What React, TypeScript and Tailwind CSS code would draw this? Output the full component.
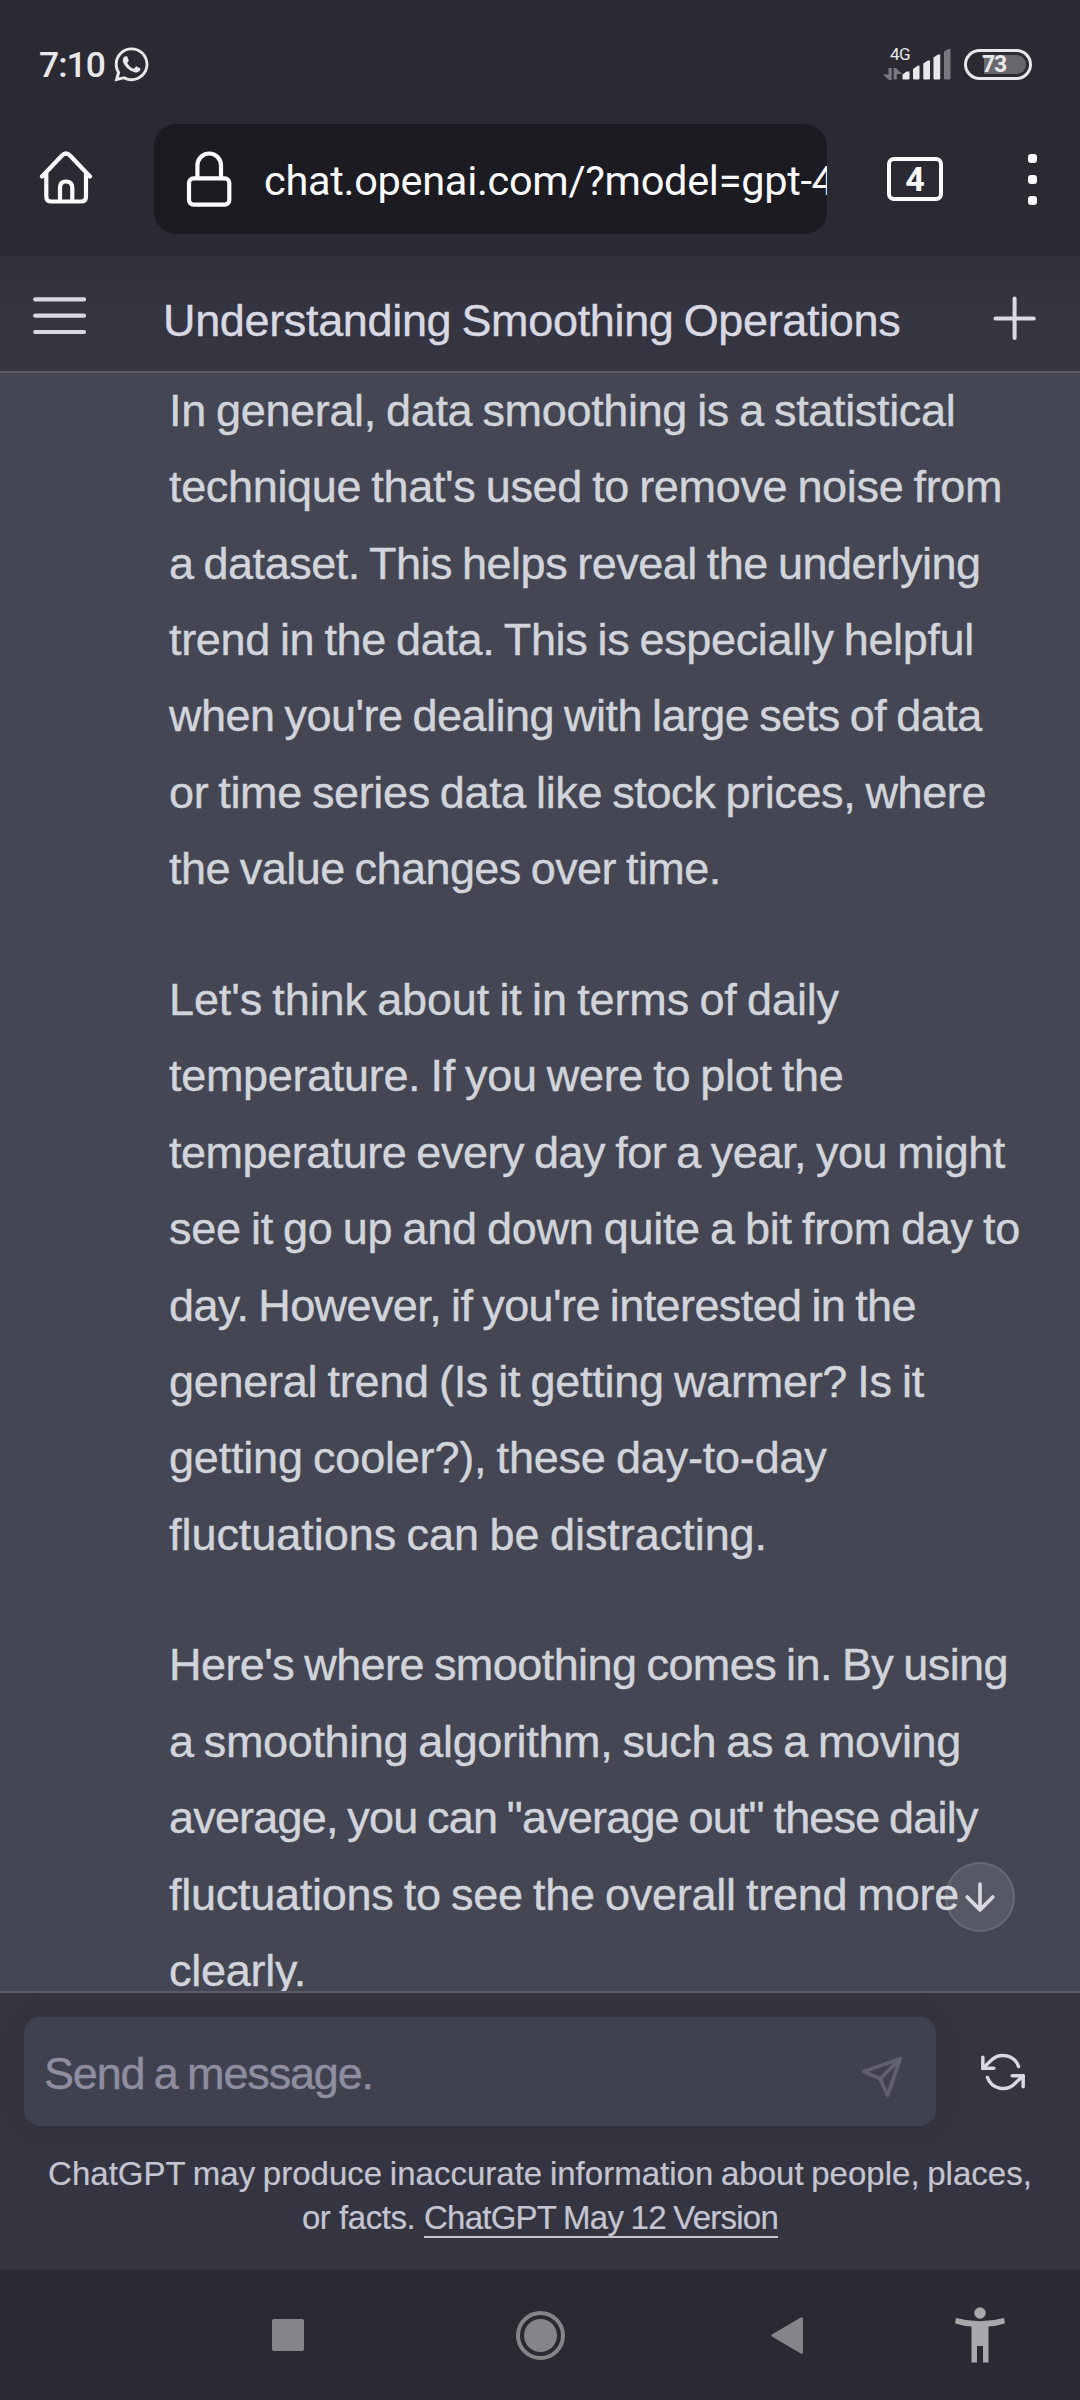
const paragraphs: { text: string; tracking: string }[][] = [
  [
    { text: 'In general, data smoothing is a statistical', tracking: 'tracking-[-0.34px]' },
    { text: "technique that's used to remove noise from", tracking: 'tracking-[-0.33px]' },
    { text: 'a dataset. This helps reveal the underlying', tracking: 'tracking-[-0.49px]' },
    { text: 'trend in the data. This is especially helpful', tracking: 'tracking-[-0.35px]' },
    { text: "when you're dealing with large sets of data", tracking: 'tracking-[-0.52px]' },
    { text: 'or time series data like stock prices, where', tracking: 'tracking-[-0.38px]' },
    { text: 'the value changes over time.', tracking: 'tracking-[-0.56px]' },
  ],
  [
    { text: "Let's think about it in terms of daily", tracking: 'tracking-[-0.13px]' },
    { text: 'temperature. If you were to plot the', tracking: 'tracking-[-0.32px]' },
    { text: 'temperature every day for a year, you might', tracking: 'tracking-[-0.48px]' },
    { text: 'see it go up and down quite a bit from day to', tracking: 'tracking-[-0.28px]' },
    { text: "day. However, if you're interested in the", tracking: 'tracking-[-0.59px]' },
    { text: 'general trend (Is it getting warmer? Is it', tracking: 'tracking-[-0.27px]' },
    { text: 'getting cooler?), these day-to-day', tracking: 'tracking-[-0.2px]' },
    { text: 'fluctuations can be distracting.', tracking: 'tracking-[-0.04px]' },
  ],
  [
    { text: "Here's where smoothing comes in. By using", tracking: 'tracking-[-0.56px]' },
    { text: 'a smoothing algorithm, such as a moving', tracking: 'tracking-[-0.36px]' },
    { text: 'average, you can "average out" these daily', tracking: 'tracking-[-0.82px]' },
    { text: 'fluctuations to see the overall trend more', tracking: 'tracking-[-0.26px]' },
    { text: 'clearly.', tracking: 'tracking-[-0.27px]' },
  ],
];

function StatusBar() {
  return (
    <div className="flex h-[124px] items-start pt-[45px] text-[#e8e8ea]">
      <span className="mt-px ml-[39px] w-[75px] text-[35.5px] leading-[38px] font-medium tracking-[-1px]">7:10</span>
      <svg className="mt-[2px] size-[35px]" viewBox="0 0 24 24" fill="currentColor">
        <path d="M12.04 0.3C5.6 0.3 0.5 5.4 0.5 11.8c0 2 0.5 4 1.5 5.6L0.4 23.6l6.2-1.5c1.7 0.9 3.5 1.3 5.4 1.3 6.4 0 11.6-5.1 11.6-11.6S18.4 0.3 12.04 0.3zm0 21.1c-1.8 0-3.5-.5-5-1.4l-3.7.9.9-3.6c-1-1.6-1.7-3.4-1.7-5.5 0-5.2 4.2-9.5 9.5-9.5s9.6 4.3 9.6 9.5-4.3 9.6-9.6 9.6z" />
        <path d="M17.5 14.4c-.3-.2-1.8-.9-2-1s-.5-.1-.7.2-.8 1-.9 1.1-.3.2-.6.1-1.300-.5-2.400-1.500c-.9-.8-1.500-1.800-1.700-2.100s0-.5.100-.6c.2-.2.3-.4.5-.6.1-.2.2-.3.300-.5s0-.4 0-.5-.7-1.600-.9-2.200c-.2-.6-.5-.5-.7-.5h-.6c-.2 0-.5.1-.8.4S6 7.700 6 9.100s1.100 2.900 1.200 3.100 2.100 3.200 5.100 4.500c.7.3 1.300.5 1.700.6.700.2 1.400.2 1.900.1.600-.1 1.800-.7 2-1.400s.2-1.300.2-1.400-.3-.1-.6-.2z" />
      </svg>
      <div className="relative ml-[734px] h-[36px] w-[69px]">
        <span className="absolute top-0 left-[7px] text-[17px] leading-[18px] tracking-[-0.5px]">4G</span>
        <svg className="size-full" viewBox="883 45 69 36" fill="currentColor">
          <g fill="#7a7980">
            <path d="M888.500 68h3.200v12h-2.700l-6-5.500h5.500zM893.600 68h2.400l6 6h-5.200v5.500h-3.200z" />
            <path d="M944 51.500l4.500-2.500h2v29.500q0 1-1 1H945q-1 0-1-1z" />
          </g>
          <path d="M902.500 74.500l4-3h3V78.500q0 1-1 1h-5q-1 0-1-1zM913 69l5-3.500h1.500V78.500q0 1-1 1H914q-1 0-1-1zM923.300 63.500l4.500-3H930V78.500q0 1-1 1h-4.700q-1 0-1-1zM933.500 57.500l4.500-3H940.200V78.500q0 1-1 1h-4.700q-1 0-1-1z" />
        </svg>
      </div>
      <div className="relative mt-[4px] ml-[12px] flex h-[31px] w-[68px] items-center rounded-full border-[3px] border-current">
        <div className="absolute top-[3px] right-[3px] h-[19px] w-[42px] rounded-r-full bg-[#68676e]" />
        <span className="relative mt-px ml-[15px] text-[23px] leading-[24px] font-bold tracking-[-1.2px]">73</span>
      </div>
    </div>
  );
}

function BrowserBar() {
  return (
    <div className="flex h-[132px] items-start text-[#fbfbfe]">
      <svg className="mt-[25px] ml-[38px] size-[56px]" viewBox="38 149 56 56" fill="none" stroke="currentColor" strokeWidth="4.200" strokeLinecap="round" strokeLinejoin="round">
        <path d="M42 176.500L62 155.500Q66 151.500 70 155.500L90 176.500M46.300 173V196.500Q46.300 201.500 51.300 201.500H81Q86 201.500 86 196.500V173M60 201V187.500Q60 181.500 66 181.500T72.300 187.500V201" />
      </svg>
      <div className="ml-[60px] flex h-[110px] w-[673px] items-center overflow-hidden rounded-[22px] bg-[#1c1b22]">
        <svg className="ml-[31px] h-[60px] w-[48px] shrink-0" viewBox="185 149 48 60" fill="none" stroke="currentColor" strokeWidth="4.200">
          <rect x="189" y="178.300" width="40.300" height="26.300" rx="4.500" />
          <path d="M197.400 178V165.500a11.800 12 0 0 1 23.600 0V178" />
        </svg>
        <span className="mt-[4px] ml-[31px] text-[41.500px] leading-[50px] tracking-[-0.3px] whitespace-nowrap">chat.openai.com/?model=gpt-4</span>
      </div>
      <div className="mt-[33px] ml-[60px] flex h-[44px] w-[56px] items-center justify-center rounded-[7px] border-[4px] border-current text-[34px] leading-[36px] font-bold">4</div>
      <div className="mt-[30px] ml-[85px] flex flex-col gap-[12px]">
        <i className="size-[9px] rounded-[3px] bg-current" />
        <i className="size-[9px] rounded-[3px] bg-current" />
        <i className="size-[9px] rounded-[3px] bg-current" />
      </div>
    </div>
  );
}

function ChatHeader() {
  return (
    <header className="flex h-[117px] items-start border-b-2 border-[#5b5b67] bg-linear-to-b from-[#2f2f39] via-[#343541] via-45% to-[#343541] text-[#d9d9e3]">
      <svg className="mt-[40px] ml-[31px] h-[40px] w-[58px]" viewBox="31 296 58 40" stroke="currentColor" strokeWidth="4.200" strokeLinecap="round">
        <path d="M35.200 299.400H84M35.200 315.700H84M35.200 332H84" />
      </svg>
      <h1 className="mt-[40px] ml-[74px] w-[800px] font-[Liberation_Sans] text-[45px] leading-[50px] tracking-[-0.34px] [word-spacing:-2px] whitespace-nowrap [-webkit-text-stroke:0.4px]">Understanding Smoothing Operations</h1>
      <svg className="mt-[39px] ml-[29px] size-[46px]" viewBox="0 0 46 46" stroke="currentColor" strokeWidth="4" strokeLinecap="round">
        <path d="M22.600 3.500V43M3.500 23.500H41.800" />
      </svg>
    </header>
  );
}

function Conversation() {
  return (
    <main className="relative h-[1618px] overflow-hidden bg-[#444654] pl-[169px] font-[Liberation_Sans] text-[45px] leading-[76.36px] text-[#d1d5db] [word-spacing:-2px] [-webkit-text-stroke:0.4px]">
      <div className="flex flex-col gap-[54.55px]">
        {paragraphs.map((lines, i) => (
          <p key={i}>
            {lines.map((line) => (
              <span key={line.text} className={`block whitespace-nowrap ${line.tracking}`}>
                {line.text}
              </span>
            ))}
          </p>
        ))}
      </div>
      <button className="absolute right-[65px] bottom-[59px] flex size-[70px] items-center justify-center rounded-full border-2 border-white/10 bg-white/10 text-[#d9d9e3]">
        <svg className="size-[44px]" viewBox="0 0 24 24" fill="none" stroke="currentColor" strokeWidth="2" strokeLinecap="round" strokeLinejoin="round">
          <path d="M12 5v14M19 12l-7 7-7-7" />
        </svg>
      </button>
    </main>
  );
}

function Composer() {
  return (
    <footer className="h-[279px] border-t-2 border-[#5b5b67] bg-[#343541] font-[Liberation_Sans]">
      <div className="mt-[24px] flex h-[109px] items-center">
        <div className="ml-[24px] flex h-full w-[912px] items-center justify-between rounded-[16px] bg-[#40414f] pr-[32px] pl-[20px] shadow-[0_0_27px_rgba(0,0,0,0.1)]">
          <span className="mt-[5px] text-[45px] leading-[50px] tracking-[-1.15px] [word-spacing:-2px] text-[#8e8ea0] [-webkit-text-stroke:0.4px]">Send a message.</span>
          <svg className="mt-[10px] size-[44px]" viewBox="0 0 24 24" fill="none" stroke="#616070" strokeWidth="2" strokeLinecap="round" strokeLinejoin="round">
            <path d="M22 2L11 13M22 2l-7 20-4-9-9-4z" />
          </svg>
        </div>
        <svg className="ml-[45px] size-[44px]" viewBox="0 0 24 24" fill="none" stroke="#d9d9e3" strokeWidth="1.900" strokeLinecap="round" strokeLinejoin="round">
          <path d="M1 4v6h6M23 20v-6h-6" />
          <path d="M20.490 9A9 9 0 0 0 5.640 5.640L1 10m22 4l-4.640 4.360A9 9 0 0 1 3.510 15" />
        </svg>
      </div>
      <p className="mt-[26px] text-center text-[33px] leading-[43.600px] whitespace-nowrap text-[#c5c5d2] [-webkit-text-stroke:0.2px]">
        <span className="block tracking-[0.010px] [word-spacing:-1.500px]">ChatGPT may produce inaccurate information about people, places,</span>
        <span className="block tracking-[-0.450px]">
          or facts. <a className="border-b-2 border-current tracking-[-0.750px] [word-spacing:-1px]">ChatGPT May 12 Version</a>
        </span>
      </p>
    </footer>
  );
}

function NavigationBar() {
  return (
    <nav className="flex h-[130px] items-center text-[#858488]">
      <div className="ml-[272px] size-[32px] rounded-[2px] bg-current" />
      <div className="ml-[212px] flex size-[49px] items-center justify-center rounded-full border-4 border-current">
        <div className="size-[33px] rounded-full bg-current" />
      </div>
      <svg className="ml-[205px] h-[38px] w-[34px]" viewBox="770 2316 34 38" fill="currentColor" stroke="currentColor" strokeWidth="3" strokeLinejoin="round">
        <path d="M773 2335.500L801.500 2318.800V2352.200z" />
      </svg>
      <svg className="ml-[150px] h-[58px] w-[52px]" viewBox="954 2306 52 58" fill="#a9a9ab">
        <circle cx="980" cy="2313" r="5.700" />
        <path d="M956 2318Q980 2324.500 1004 2318L1005 2323.500Q997 2326 988.500 2326.500V2362.500H983V2346H977V2362.500H971.500V2326.500Q963 2326 955 2323.500z" />
      </svg>
    </nav>
  );
}

export default function App() {
  return (
    <div className="flex h-[2400px] w-[1080px] flex-col overflow-hidden bg-[#2b2a33] font-[Roboto]">
      <StatusBar />
      <BrowserBar />
      <ChatHeader />
      <Conversation />
      <Composer />
      <NavigationBar />
    </div>
  );
}
